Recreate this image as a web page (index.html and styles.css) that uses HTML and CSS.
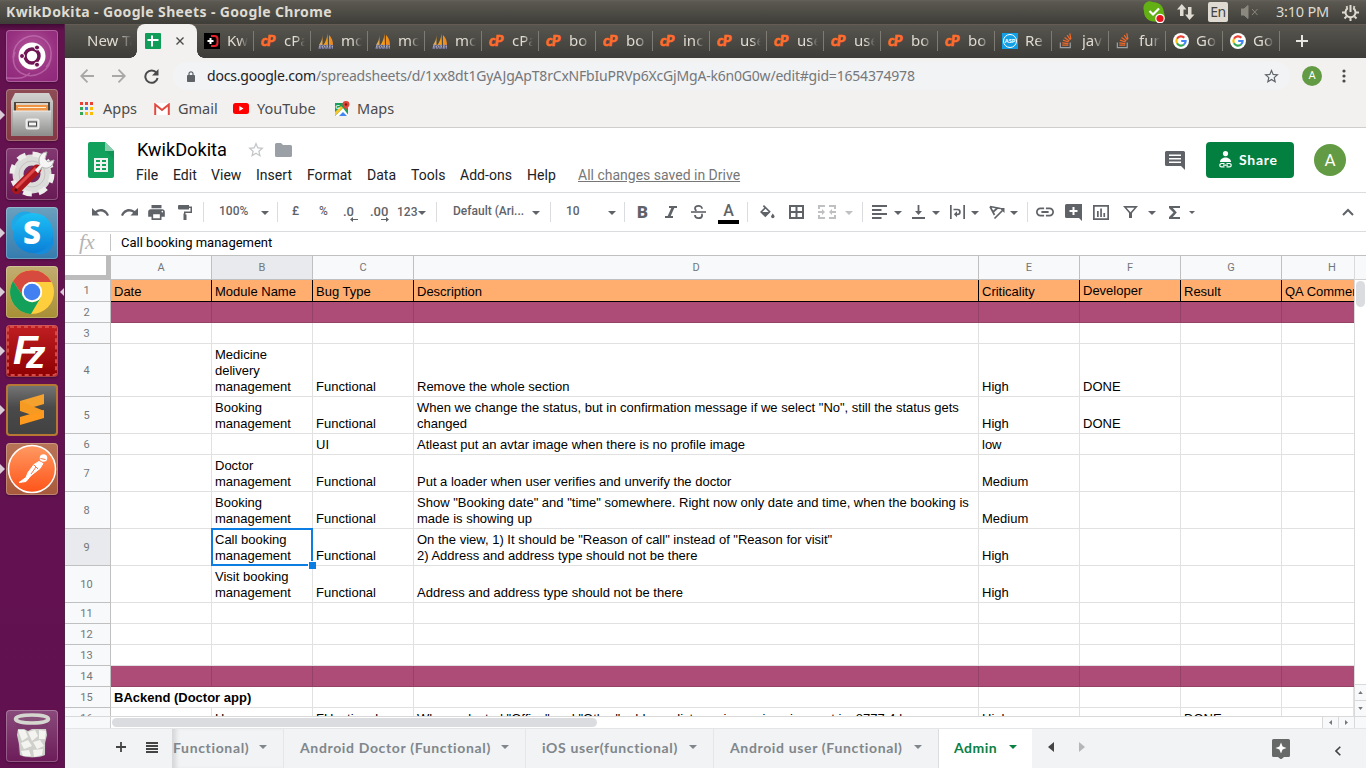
FILE: index.html
```html
<!DOCTYPE html>
<html lang="en">
<head>
<meta charset="utf-8">
<title>KwikDokita - Google Sheets</title>
<link rel="stylesheet" href="styles.css">
</head>
<body>
<svg class="defs" width="0" height="0">
  <defs>
    <linearGradient id="sail" x1="0" y1="0" x2="1" y2="0"><stop offset="0" stop-color="#d8b070"/><stop offset=".5" stop-color="#f89c0e"/><stop offset="1" stop-color="#e8862a"/></linearGradient>
    <linearGradient id="steel" x1="0" y1="0" x2="0" y2="1"><stop offset="0" stop-color="#d2d2d0"/><stop offset="1" stop-color="#8f8f8d"/></linearGradient>
    <linearGradient id="sky" x1="0" y1="0" x2="0" y2="1"><stop offset="0" stop-color="#1cc0f5"/><stop offset="1" stop-color="#0b7fd8"/></linearGradient>
    <linearGradient id="ember" x1="0" y1="0" x2="0" y2="1"><stop offset="0" stop-color="#ff9a62"/><stop offset="1" stop-color="#ff5419"/></linearGradient>
    <symbol id="caret" viewBox="0 0 8 4"><path d="M0 0h8L4 4z"/></symbol>
    <symbol id="cp" viewBox="0 0 17 16"><text x="0" y="12.500" font-family="Lato" font-weight="900" font-style="italic" font-size="14.500" letter-spacing="-.6" fill="#ff6c2c" stroke="#ff6c2c" stroke-width=".6">cP</text></symbol>
    <symbol id="pma" viewBox="0 0 16 16"><path d="M4.500 2c0 4-1.500 7-3.500 10h3.500zM9.500.500C9 5 8 8 5.500 12H10zM11 2c3 3 4 6 4 10h-4z" fill="url(#sail)"/><path d="M1 12.500h14M.5 15h14.500" stroke="#8284b4" stroke-width="1.500" stroke-dasharray="2.500 .8"/><path d="M1 13.800h14" stroke="#c9c9e2" stroke-dasharray="1.500 1"/></symbol>
    <symbol id="so" viewBox="0 0 14 17"><path d="M1 10v5.500h10.500V10" fill="none" stroke="#9aa0a5" stroke-width="1.300"/><path d="M3 13h6.500M3 10.600l6.500.8M3.800 7.600l6 2M5.500 4.700l5 3.800M8.200 2.200l3.500 5M11 .5l1.200 6" stroke="#f0692a" stroke-width="1.300"/></symbol>
    <symbol id="goog" viewBox="0 0 16 16"><circle cx="8" cy="8" r="8" fill="#fff"/><g fill="none" stroke-width="2.200"><path d="M4 5.700A4.600 4.600 0 0 1 11.300 4.800" stroke="#ea4335"/><path d="M4 5.700a4.600 4.600 0 0 0 0 4.600" stroke="#fbbc05"/><path d="M4 10.300a4.600 4.600 0 0 0 7 1.200" stroke="#34a853"/><path d="M8.200 8h4.400a4.600 4.600 0 0 1-1.600 3.500" stroke="#4285f4"/></g></symbol>
    <symbol id="up" viewBox="0 0 6 4"><path d="M0 4h6L3 0z"/></symbol>
  </defs>
</svg>

<header class="panel">
  <div class="panel-title">KwikDokita - Google Sheets - Google Chrome</div>
  <svg width="22" height="22" viewBox="0 0 22 22"><path d="M5 .5c2-.6 3.500.2 4.500.5 6 0 11 3.500 11.300 10 .8 2 1.500 5 .2 7.500-2 3.500-5 3.300-7.500 2.300C6 21 1 17 1 10.500-.5 6 1 1.500 5 .500z" fill="#62b014"/><path d="M6.500 10l3.500 3.500 6-6" fill="none" stroke="#fff" stroke-width="2.200"/><circle cx="17" cy="17.500" r="4.200" fill="#e8131b" stroke="#fff" stroke-width="1.200"/></svg>
  <svg width="18" height="18" viewBox="0 0 18 18"><path d="M4.800 1L0 6.500h3V13h3.500V6.500h3zM12.500 17L8 11.500h3V4h3.500v7.500h3z" fill="#dfdbd2"/></svg>
  <div class="lang">En</div>
  <svg width="18" height="14" viewBox="0 0 18 14"><path d="M0 4h3l4-3.500v13L3 10H0zM11 4l5.500 6M16.500 4L11 10" fill="#8b887f" stroke="#8b887f"/></svg>
  <div class="clock">3:10 PM</div>
  <svg width="17" height="17" viewBox="0 0 17 17"><g fill="none" stroke="#dfdbd2"><path d="M5.800 4.100a5 5 0 1 0 5.400 0" stroke-width="2"/><path d="M8.500 1v7" stroke-width="2"/><path d="M4.400 2.200l1 1.600M12.600 2.200l-1 1.600M0 8.500h3M14 8.500h3M2.500 14.500L4.600 12.400M14.500 14.500l-2.100-2.100M8.500 17v-3" stroke-width="2"/></g></svg>
</header>

<div class="desktop">
<nav class="launcher">
  <div class="tile dash"><svg viewBox="0 0 52 52"><g fill="none" stroke="#d48bc8" stroke-width="1.500" opacity=".5"><path d="M7 28C7 10 25 0 39 10c8 7 8 20 1 27M45 24c1 18-18 26-30 19-8-5-9-14-6-21M0 48c13 0 16 2 24-5"/></g><circle cx="26" cy="26" r="13.500" fill="#fff"/><circle cx="26" cy="26" r="7" fill="none" stroke="#701553" stroke-width="3.500"/><g fill="#701553" stroke="#fff" stroke-width="1"><circle cx="16" cy="26" r="2.500"/><circle cx="31" cy="17.500" r="2.500"/><circle cx="31" cy="34.700" r="2.500"/></g></svg></div>
  <div class="tile files run"><svg viewBox="0 0 52 52"><path d="M9 4h34l4 8v35H5V12z" fill="url(#steel)"/><path d="M8 13h36v9H8z" fill="#4b4540"/><path d="M10 14h32v2H10z" fill="#ddd2c4"/><path d="M10 16h32v6H10z" fill="#ee9445"/><path d="M12 18.500h28" stroke="#fff0d8"/><path d="M7 22h38v24H7z" fill="url(#steel)"/><path d="M7 22h38" stroke="#eee"/><rect x="20.500" y="30.500" width="12" height="9" rx="1.500" fill="#bbb" stroke="#eee" stroke-width="2"/><rect x="22.500" y="33" width="8" height="4" fill="#f5f5f5" stroke="#444"/></svg></div>
  <div class="tile settings"><svg viewBox="0 0 52 52"><circle cx="26" cy="26" r="14" fill="none" stroke="#dcdcda" stroke-width="11"/><circle cx="26" cy="26" r="20" fill="none" stroke="#ededeb" stroke-width="5" stroke-dasharray="8.700 7"/><circle cx="26" cy="26" r="13" fill="none" stroke="#c6c5c3"/><path d="M10.500 41.500L31 21" stroke="#ad171c" stroke-width="9" stroke-linecap="round"/><path d="M10 40l20-20" stroke="#df4b4c" stroke-width="3"/><circle cx="10" cy="42" r="1.500" fill="#4b1015"/><path d="M29 22l5-5c-3-7 1-13 7-13l-2 7 3 3 6-2c-1 7-7 10-12 7l-4 6z" fill="#f5f5f5" stroke="#b4b4b4"/></svg></div>
  <div class="tile skype run"><svg viewBox="0 0 52 52"><circle cx="19" cy="18" r="13.500" fill="#1fa8e6"/><circle cx="34" cy="34" r="13.500" fill="#158bdc"/><circle cx="27" cy="26" r="20" fill="url(#sky)"/><text x="26" y="37" text-anchor="middle" font-family="Open Sans" font-weight="800" font-size="31" fill="#fff">S</text></svg></div>
  <div class="tile chrome run active"><svg viewBox="0 0 52 52"><circle cx="26" cy="26" r="22" fill="#ffce3c"/><path d="M26 16h19.500A22 22 0 0 0 7 15l10.500 16A10 10 0 0 1 26 16z" fill="#d64b3e"/><path d="M7 15a22 22 0 0 0 18 33l10-17a10 10 0 0 1-17.500 0z" fill="#13a05b"/><circle cx="26" cy="26" r="10.200" fill="#fff"/><circle cx="26" cy="26" r="8.300" fill="#427ff0"/></svg></div>
  <div class="tile zilla run"><svg viewBox="0 0 52 52"><rect x="2" y="2" width="48" height="48" rx="2" fill="none" stroke="#d54a47" stroke-width="2" stroke-dasharray="4 3"/><g font-family="Liberation Sans" font-weight="700" font-style="italic" fill="#fff"><text x="7" y="39" font-size="41">F</text><text x="20" y="43" font-size="39">z</text></g></svg></div>
  <div class="tile sublime run"><svg viewBox="0 0 52 52"><path d="M14 17l24-7v10l-24 7z" fill="#f5a12d"/><path d="M14 19l24 8v7l-24-8z" fill="#d98118"/><path d="M14 33l24-7v8L14 41z" fill="#ff9a1e"/><path d="M14 17v10l12 4 12-4z" fill="#f79a22"/></svg></div>
  <div class="tile postman run"><svg viewBox="0 0 52 52"><circle cx="26" cy="26" r="23.500" fill="url(#ember)" stroke="#fff" stroke-width="1.500"/><circle cx="37.500" cy="15" r="3.800" fill="#fff"/><path d="M33 18.500l-5 3-6 8-2 5-7 5 7-1 5-6 9-7 3-5z" fill="#fff" stroke="#fff" stroke-linejoin="round"/><path d="M30 24l-5 7M28 22l4 4M34.500 15.500l5 1" stroke="#ff713d"/></svg></div>
  <div class="tile trash"><svg viewBox="0 0 52 52"><path d="M10 12l3 33c6 4 20 4 26 0l3-33z" fill="#7d3a6c"/><path d="M12 19h6l4 2 4-2h6l8 0 1 6-2 8 0 12c-6 3-19 3-25 0l-1-11-2-9z" fill="#cfcfcb"/><path d="M12 20l7 0 3 7-6 4zM22 22l7-2 3 6-6 5zM33 20l7 1-1 8-6 0zM15 33l7-3 4 6-8 3zM27 32l7-2 4 6-7 3zM15 41l8-1 2 6-8 0zM27 40l10-1-1 6-8 2z" fill="#f3f3f0"/><ellipse cx="26" cy="9" rx="16.500" ry="4" fill="#865078" stroke="#d6d6d0" stroke-width="3.500"/></svg></div>
</nav>

<main class="browser">
  <div class="tabstrip">
    <div class="newtab-tab"><span class="fade">New Tab</span></div>
    <div class="tab-active">
      <svg width="16" height="16" viewBox="0 0 16 16"><rect width="16" height="16" rx="1" fill="#0f9d58"/><path d="M2.500 7h11M7 2.500v11" stroke="#fff" stroke-width="2"/></svg>
      <svg width="8" height="8" viewBox="0 0 8 8"><path d="M.5.500l7 7M7.500.500l-7 7" stroke="#4a4a48" stroke-width="1.400"/></svg>
    </div>
    <div class="tab"><svg width="16" height="16" viewBox="0 0 16 16"><path d="M0 0h16v16H0z" fill="#000"/><path d="M7 3h3.500q3 0 3 3v4q0 3-3 3H7" fill="none" stroke="#e8202a" stroke-width="2"/><path d="M6.500 5v6M3.500 8h6" stroke="#fff" stroke-width="2"/></svg><span class="fade">Kwik</span></div>
    <div class="tab"><svg width="17" height="16"><use href="#cp"/></svg><span class="fade">cPa</span></div>
    <div class="tab"><svg width="16" height="16"><use href="#pma"/></svg><span class="fade">mo</span></div>
    <div class="tab"><svg width="16" height="16"><use href="#pma"/></svg><span class="fade">mo</span></div>
    <div class="tab"><svg width="16" height="16"><use href="#pma"/></svg><span class="fade">mo</span></div>
    <div class="tab"><svg width="17" height="16"><use href="#cp"/></svg><span class="fade">cPa</span></div>
    <div class="tab"><svg width="17" height="16"><use href="#cp"/></svg><span class="fade">bo</span></div>
    <div class="tab"><svg width="17" height="16"><use href="#cp"/></svg><span class="fade">bo</span></div>
    <div class="tab"><svg width="17" height="16"><use href="#cp"/></svg><span class="fade">inc</span></div>
    <div class="tab"><svg width="17" height="16"><use href="#cp"/></svg><span class="fade">use</span></div>
    <div class="tab"><svg width="17" height="16"><use href="#cp"/></svg><span class="fade">use</span></div>
    <div class="tab"><svg width="17" height="16"><use href="#cp"/></svg><span class="fade">use</span></div>
    <div class="tab"><svg width="17" height="16"><use href="#cp"/></svg><span class="fade">bo</span></div>
    <div class="tab"><svg width="17" height="16"><use href="#cp"/></svg><span class="fade">bo</span></div>
    <div class="tab"><svg width="16" height="16" viewBox="0 0 16 16"><path d="M0 0h16v16H0z" fill="#129fe6"/><circle cx="8" cy="8" r="6.500" fill="none" stroke="#fff"/><text x="8" y="10" text-anchor="middle" font-family="Lato" font-weight="900" font-size="5.500" fill="#fff">ASP</text></svg><span class="fade">Re</span></div>
    <div class="tab"><svg width="14" height="16"><use href="#so"/></svg><span class="fade">java</span></div>
    <div class="tab"><svg width="14" height="16"><use href="#so"/></svg><span class="fade">fun</span></div>
    <div class="tab"><svg width="16" height="16"><use href="#goog"/></svg><span class="fade">Go</span></div>
    <div class="tab"><svg width="16" height="16"><use href="#goog"/></svg><span class="fade">Go</span></div>
    <svg class="plus" width="12" height="12" viewBox="0 0 12 12"><path d="M6 0v12M0 6h12" stroke="#e8e6e1" stroke-width="2"/></svg>
  </div>

  <div class="navbar">
    <svg width="14" height="14" viewBox="0 0 14 14"><path d="M14 7H1.500M7.500.700L1.200 7l6.300 6.300" fill="none" stroke="#a9a8a7" stroke-width="1.800"/></svg>
    <svg width="14" height="14" viewBox="0 0 14 14"><path d="M0 7h12.500M6.500.700L12.800 7l-6.300 6.300" fill="none" stroke="#a9a8a7" stroke-width="1.800"/></svg>
    <svg width="15" height="15" viewBox="0 0 15 15"><path d="M12.600 4A6.200 6.200 0 1 0 13.600 9" fill="none" stroke="#4a4a4a" stroke-width="2"/><path d="M14.500 0v6.500H8z" fill="#4a4a4a"/></svg>
    <div class="omnibox">
      <svg width="8" height="11" viewBox="0 0 8 11"><rect y="4" width="8" height="7" rx=".8" fill="#5f6368"/><path d="M2 5V2.800a2 2 0 0 1 4 0V5" fill="none" stroke="#5f6368" stroke-width="1.200"/></svg>
      <div class="url"><b>docs.google.com</b>/spreadsheets/d/1xx8dt1GyAJgApT8rCxNFbIuPRVp6XcGjMgA-k6n0G0w/edit#gid=1654374978</div>
      <svg width="15" height="14" viewBox="2 2 20 19"><path fill="#5f6368" d="M22 9.240l-7.190-.62L12 2 9.190 8.630 2 9.240l5.460 4.730L5.820 21 12 17.270 18.180 21l-1.630-7.030zM12 15.400l-3.760 2.270 1-4.280-3.320-2.880 4.380-.38L12 6.100l1.710 4.040 4.380.38-3.320 2.880 1 4.280z"/></svg>
    </div>
    <div class="me-small">A</div>
    <svg width="4" height="14" viewBox="0 0 4 14" fill="#4a4a4a"><circle cx="2" cy="2" r="1.600"/><circle cx="2" cy="7" r="1.600"/><circle cx="2" cy="12" r="1.600"/></svg>
  </div>

  <div class="bookmarks">
    <svg width="13" height="13" viewBox="0 0 13 13"><path d="M0 0h3v3H0zM5 0h3v3H5zM10 0h3v3h-3zM0 5h3v3H0z" fill="#ea4335"/><path d="M5 5h3v3H5z" fill="#4285f4"/><path d="M10 5h3v3h-3zM10 10h3v3h-3zM5 10h3v3H5z" fill="#fbbc05"/><path d="M0 10h3v3H0zM0 5h3v3H0z" fill="#34a853"/></svg>
    <span>Apps</span>
    <svg width="16" height="12" viewBox="0 0 16 12"><rect width="16" height="12" rx="1" fill="#fff"/><path d="M1.200 12V1.500L8 7l6.800-5.500V12" fill="none" stroke="#e04a3f" stroke-width="2"/></svg>
    <span>Gmail</span>
    <svg width="16" height="11" viewBox="0 0 16 11"><rect width="16" height="11" rx="2.500" fill="#f00"/><path d="M6.300 3v5l4.200-2.500z" fill="#fff"/></svg>
    <span class="wide">YouTube</span>
    <svg width="16" height="16" viewBox="0 0 16 16"><path d="M1 2h8l5 5v8H1z" fill="#1a9f5a"/><path d="M1 15L9 7l6 8z" fill="#fff"/><path d="M1 15V11l6-6 2 2z" fill="#f9c32a"/><path d="M5 15l4-4 4 4z" fill="#4285f4"/><text x="1.500" y="7.500" font-family="Lato" font-size="6" font-weight="700" fill="#fff">G</text><path d="M12 0a3.500 3.500 0 0 0-3.500 3.600C8.500 6 11.500 7 12 10c.5-3 3.500-4 3.500-6.400A3.500 3.500 0 0 0 12 0z" fill="#e04538"/><circle cx="12" cy="3.500" r="1.200" fill="#7b1c14"/></svg>
    <span>Maps</span>
  </div>

  <section class="docs-head">
    <svg class="logo" width="26" height="36" viewBox="0 0 26 36"><path d="M2 0h15l9 9v25a2 2 0 0 1-2 2H2a2 2 0 0 1-2-2V2a2 2 0 0 1 2-2z" fill="#12a15c"/><path d="M17 0l9 9h-9z" fill="#87ceac"/><path d="M17 9h9v8z" fill="#0b8a4d" opacity=".5"/><path d="M6 16h14v14H6zM8 18v2h4v-2zM14 18v2h4v-2zM8 22v2h4v-2zM14 22v2h4v-2zM8 26v2h4v-2zM14 26v2h4v-2z" fill="#f1f1f1" fill-rule="evenodd"/></svg>
    <div class="doc-info">
      <div class="doc-title"><h1>KwikDokita</h1>
        <svg width="16" height="15" viewBox="2 2 20 19"><path fill="#c4c6c8" d="M22 9.240l-7.190-.62L12 2 9.190 8.630 2 9.240l5.460 4.730L5.820 21 12 17.270 18.180 21l-1.630-7.030zM12 15.400l-3.760 2.270 1-4.280-3.320-2.880 4.380-.38L12 6.100l1.710 4.040 4.380.38-3.320 2.880 1 4.280z"/></svg>
        <svg width="17" height="14" viewBox="0 0 17 14"><path d="M1.500 0H6l2 2h7.500A1.500 1.500 0 0 1 17 3.500v9a1.500 1.500 0 0 1-1.500 1.500h-14A1.500 1.500 0 0 1 0 12.500v-11A1.500 1.500 0 0 1 1.500 0z" fill="#9aa0a6"/></svg>
      </div>
      <div class="menu"><span>File</span><span>Edit</span><span>View</span><span>Insert</span><span>Format</span><span>Data</span><span>Tools</span><span>Add-ons</span><span>Help</span><a class="saved">All changes saved in Drive</a></div>
    </div>
    <svg class="comments" width="20" height="19" viewBox="0 0 20 19"><path d="M1.500 0h17A1.500 1.500 0 0 1 20 1.500V19l-4-4H1.500A1.500 1.500 0 0 1 0 13.500v-12A1.500 1.500 0 0 1 1.500 0zM4 3.500v1.500h12V3.500zM4 7v1.500h12V7zM4 10.500V12h12v-1.500z" fill="#5f6368" fill-rule="evenodd"/></svg>
    <button class="share"><svg width="13" height="17" viewBox="0 0 13 17"><circle cx="6.500" cy="2.600" r="2.600" fill="#fff"/><path d="M1 11c0-3 3-4.500 5.500-4.500S12 8 12 11z" fill="#fff"/><path d="M5.500 12.500h-3a1.700 1.700 0 0 0 0 3.400h3M7.500 12.500h3a1.700 1.700 0 0 1 0 3.400h-3M4 14.200h5" fill="none" stroke="#fff" stroke-width="1.200"/></svg>Share</button>
    <div class="me">A</div>
  </section>

  <div class="toolbar">
    <svg width="17" height="8" viewBox="0 0 17 8"><path d="M0 0v7.500h7.500L4.800 4.800C8.500 2.200 13 3.500 15 8l2-.8C14.500 1 8.500-1 3.200 3.100z"/></svg>
    <svg width="17" height="8" viewBox="0 0 17 8"><path d="M17 0v7.500H9.500l2.700-2.700C8.500 2.200 4 3.500 2 8L0 7.200C2.500 1 8.500-1 13.800 3.100z"/></svg>
    <svg width="17" height="15" viewBox="2 3 20 18"><path d="M19 8H5c-1.660 0-3 1.340-3 3v6h4v4h12v-4h4v-6c0-1.660-1.340-3-3-3zm-3 11H8v-5h8v5zm3-7c-.55 0-1-.45-1-1s.45-1 1-1 1 .45 1 1-.45 1-1 1zm-1-9H6v4h12V3z"/></svg>
    <svg width="14" height="15" viewBox="0 0 14 15"><path d="M1 0h10v1.500h3V8H7.500v1.500h1V15h-3V8.500H6V6.500h6.500V3H11v1.500H1a1 1 0 0 1-1-1V1a1 1 0 0 1 1-1z"/></svg>
    <i class="sep"></i>
    <span class="t">100%</span>
    <svg class="c" width="8" height="4"><use href="#caret"/></svg>
    <i class="sep"></i>
    <span class="t">£</span><span class="t">%</span>
    <span class="dec">.0<svg width="8" height="5" viewBox="0 0 8 5"><path d="M8 2H3V0L0 2.500 3 5V3h5z"/></svg></span>
    <span class="dec two">.00<svg width="8" height="5" viewBox="0 0 8 5"><path d="M0 2h5V0l3 2.500L5 5V3H0z"/></svg></span>
    <span class="t low">123</span>
    <svg class="c" width="8" height="4"><use href="#caret"/></svg>
    <i class="sep"></i>
    <span class="t">Default (Ari...</span>
    <svg class="c" width="8" height="4"><use href="#caret"/></svg>
    <i class="sep"></i>
    <span class="t">10</span>
    <svg class="c" width="8" height="4"><use href="#caret"/></svg>
    <i class="sep"></i>
    <span class="bold">B</span>
    <svg width="12" height="12" viewBox="0 0 12 12"><path d="M4 0h8v2H9.300L5.700 10H8v2H0v-2h2.700L6.300 2H4z"/></svg>
    <svg width="15" height="14" viewBox="0 0 15 14"><path d="M0 6.200h15v1.600H0z"/><path d="M11 3.800C11 1.800 9.500.900 7.500.900S4 1.900 4 3.500c0 1 .6 1.700 1.500 2.200M4 10c0 2 1.500 3.100 3.500 3.100s3.600-1 3.600-2.700c0-.7-.2-1.200-.6-1.600" fill="none" stroke="#5f6368" stroke-width="1.800"/></svg>
    <span class="tcolor">A</span>
    <i class="sep"></i>
    <svg width="16" height="14" viewBox="0 0 16 14"><path d="M5 0l6.800 6.800L6.300 12.300 1 7l4.300-4.300L3.800 1.200zM6.500 3.800L3.300 7h6.400z" fill-rule="evenodd"/><path d="M13.800 8.500s1.700 2 1.700 3a1.700 1.700 0 0 1-3.400 0c0-1 1.700-3 1.700-3z"/></svg>
    <svg width="15" height="14" viewBox="0 0 15 14"><path d="M0 0h15v14H0zM2 2v4h4.500V2zM8.500 2v4H13V2zM2 8v4h4.500V8zM8.500 8v4H13V8z" fill-rule="evenodd"/></svg>
    <svg class="off" width="18" height="14" viewBox="0 0 18 14"><path d="M0 0h7v2H2v2H0zM11 0h7v4h-2V2h-5zM0 10h2v2h5v2H0zM16 10h2v4h-7v-2h5zM0 6h4V4l3 3-3 3V8H0zM18 6h-4V4l-3 3 3 3V8h4z"/></svg>
    <svg class="c off" width="8" height="4"><use href="#caret"/></svg>
    <i class="sep"></i>
    <svg width="15" height="14" viewBox="0 0 15 14"><path d="M0 0h15v2H0zM0 4h9.500v2H0zM0 8h15v2H0zM0 12h9.500v2H0z"/></svg>
    <svg class="c" width="8" height="4"><use href="#caret"/></svg>
    <svg width="14" height="14" viewBox="0 0 14 14"><path d="M0 12h13v2H0zM5.600 0h1.800v6H10l-3.500 4L3 6h2.600z"/></svg>
    <svg class="c" width="8" height="4"><use href="#caret"/></svg>
    <svg width="15" height="14" viewBox="0 0 15 14"><path d="M0 0h1.700v14H0zM13.300 0H15v14h-1.700z"/><path d="M3.500 4.500h4a2.300 2.300 0 0 1 0 4.800H6" fill="none" stroke="#5f6368" stroke-width="1.700"/><path d="M7 6.200v6L3.800 9.200z"/></svg>
    <svg class="c" width="8" height="4"><use href="#caret"/></svg>
    <svg width="16" height="15" viewBox="0 0 16 15"><path d="M1 1.500l10.500 2M1 1.500l4.500 8.500M4 7l4.500-4" fill="none" stroke="#5f6368" stroke-width="1.700"/><path d="M5.500 13.500l8-8" stroke="#5f6368" stroke-width="1.700"/><path d="M15.500 3v5l-5-5z"/></svg>
    <svg class="c" width="8" height="4"><use href="#caret"/></svg>
    <i class="sep"></i>
    <svg width="18" height="10" viewBox="2 7 20 10"><path d="M3.900 12c0-1.710 1.390-3.100 3.100-3.100h4V7H7c-2.760 0-5 2.240-5 5s2.240 5 5 5h4v-1.900H7c-1.710 0-3.100-1.390-3.100-3.100zM8 13h8v-2H8v2zm9-6h-4v1.900h4c1.710 0 3.100 1.390 3.100 3.100s-1.390 3.100-3.100 3.100h-4V17h4c2.760 0 5-2.240 5-5s-2.240-5-5-5z"/></svg>
    <svg width="17" height="17" viewBox="0 0 17 17"><path d="M1.500 0H17v17l-3-3H1.500A1.500 1.500 0 0 1 0 12.500v-11A1.500 1.500 0 0 1 1.500 0zM7.500 3v3h-3v2h3v3h2V8h3V6h-3V3z" fill-rule="evenodd"/></svg>
    <svg width="16" height="15" viewBox="0 0 16 15"><path d="M0 0h16v15H0zM1.700 1.700v11.600h12.600V1.700zM4 6h1.700v6H4zM7.200 3.500h1.700V12H7.200zM10.400 8h1.700v4h-1.700z" fill-rule="evenodd"/></svg>
    <svg width="15" height="12" viewBox="0 0 15 12"><path d="M0 0h15L9 7v5H6V7zM3.500 1.700l4 4.500 4-4.500z" fill-rule="evenodd"/></svg>
    <svg class="c" width="8" height="4"><use href="#caret"/></svg>
    <svg width="11" height="13" viewBox="0 0 11 13"><path d="M0 0h11v2H3.800l4 4.500-4 4.500H11v2H0v-2l4.500-4.500L0 2z"/></svg>
    <svg class="c" width="6" height="3"><use href="#caret"/></svg>
    <svg width="12" height="8" viewBox="0 0 12 8"><path d="M1 7l5-5 5 5" fill="none" stroke="#5f6368" stroke-width="2"/></svg>
  </div>

  <div class="formula"><span class="fx">fx</span><i></i><span class="value">Call booking management</span></div>

  <div class="sheet-area">
    <div class="sheet">
      <div class="corner"></div><div class="ch">A</div><div class="ch sel">B</div><div class="ch">C</div><div class="ch">D</div><div class="ch">E</div><div class="ch">F</div><div class="ch">G</div><div class="ch last">H</div>
      <div class="rh">1</div><div class="o">Date</div><div class="o">Module Name</div><div class="o">Bug Type</div><div class="o">Description</div><div class="o">Criticality</div><div class="o raised">Developer</div><div class="o">Result</div><div class="o">QA Comments</div>
      <div class="rh">2</div><div class="p"></div><div class="p"></div><div class="p"></div><div class="p"></div><div class="p"></div><div class="p"></div><div class="p"></div><div class="p"></div>
      <div class="rh">3</div><div></div><div></div><div></div><div></div><div></div><div></div><div></div><div></div>
      <div class="rh">4</div><div></div><div>Medicine<br>delivery<br>management</div><div>Functional</div><div>Remove the whole section</div><div>High</div><div>DONE</div><div></div><div></div>
      <div class="rh">5</div><div></div><div>Booking<br>management</div><div>Functional</div><div>When we change the status, but in confirmation message if we select "No", still the status gets<br>changed</div><div>High</div><div>DONE</div><div></div><div></div>
      <div class="rh">6</div><div></div><div></div><div>UI</div><div>Atleast put an avtar image when there is no profile image</div><div>low</div><div></div><div></div><div></div>
      <div class="rh">7</div><div></div><div>Doctor<br>management</div><div>Functional</div><div>Put a loader when user verifies and unverify the doctor</div><div>Medium</div><div></div><div></div><div></div>
      <div class="rh">8</div><div></div><div>Booking<br>management</div><div>Functional</div><div>Show "Booking date" and "time" somewhere. Right now only date and time, when the booking is<br>made is showing up</div><div>Medium</div><div></div><div></div><div></div>
      <div class="rh sel">9</div><div></div><div class="cursor">Call booking<br>management</div><div>Functional</div><div>On the view, 1) It should be "Reason of call" instead of "Reason for visit"<br>2) Address and address type should not be there</div><div>High</div><div></div><div></div><div></div>
      <div class="rh">10</div><div></div><div>Visit booking<br>management</div><div>Functional</div><div>Address and address type should not be there</div><div>High</div><div></div><div></div><div></div>
      <div class="rh">11</div><div></div><div></div><div></div><div></div><div></div><div></div><div></div><div></div>
      <div class="rh">12</div><div></div><div></div><div></div><div></div><div></div><div></div><div></div><div></div>
      <div class="rh">13</div><div></div><div></div><div></div><div></div><div></div><div></div><div></div><div></div>
      <div class="rh">14</div><div class="p"></div><div class="p"></div><div class="p"></div><div class="p"></div><div class="p"></div><div class="p"></div><div class="p"></div><div class="p"></div>
      <div class="rh">15</div><div class="section">BAckend (Doctor app)</div><div></div><div></div><div></div><div></div><div></div><div></div>
      <div class="rh">16</div><div></div><div>Home</div><div>FUnctional</div><div>When selected "Office" and "Other" address, list was in previous is event in: 8777 4 la</div><div>High</div><div></div><div>DONE</div><div></div>
    </div>
    <div class="vscroll"><div class="vhead"></div><div class="vthumb"></div><div class="btn first"><svg width="5" height="3"><use href="#up"/></svg></div><div class="btn down"><svg width="5" height="3"><use href="#up"/></svg></div></div>
  </div>
  <div class="hscroll"><div class="hleft"></div><div class="track"><div class="hthumb"></div></div><div class="hb"><svg width="3" height="5" viewBox="0 0 3 5"><path d="M3 0v5L0 2.500z"/></svg></div><div class="hb"><svg width="3" height="5" viewBox="0 0 3 5"><path d="M0 0v5l3-2.500z"/></svg></div><div class="hend"></div></div>

  <footer class="sheets">
    <svg class="add" width="10" height="10" viewBox="0 0 10 10"><path d="M5 0v10M0 5h10" stroke="#444" stroke-width="1.800"/></svg>
    <svg class="all" width="12" height="11" viewBox="0 0 12 11"><path d="M0 1h12M0 4h12M0 7h12M0 10h12" stroke="#444" stroke-width="1.900"/></svg>
    <div class="st cut"><span>Functional)</span><svg width="8" height="4"><use href="#caret"/></svg></div>
    <div class="st s2"><span>Android Doctor (Functional)</span><svg width="8" height="4"><use href="#caret"/></svg></div>
    <div class="st s3"><span>iOS user(functional)</span><svg width="8" height="4"><use href="#caret"/></svg></div>
    <div class="st s4"><span>Android user (Functional)</span><svg width="8" height="4"><use href="#caret"/></svg></div>
    <div class="st on"><span>Admin</span><svg width="8" height="4"><use href="#caret"/></svg></div>
    <svg class="prev" width="6" height="10" viewBox="0 0 6 10"><path d="M6 0v10L0 5z" fill="#444"/></svg>
    <svg class="next" width="6" height="10" viewBox="0 0 6 10"><path d="M0 0v10l6-5z" fill="#b4b6b8"/></svg>
    <svg class="explore" width="18" height="20" viewBox="0 0 18 20"><path d="M1.500 0h15A1.500 1.500 0 0 1 18 1.500v15a1.500 1.500 0 0 1-1.500 1.500H12l-3 2.500L6 18H1.500A1.500 1.500 0 0 1 0 16.500v-15A1.500 1.500 0 0 1 1.500 0z" fill="#666967"/><path d="M9 3.500l1.600 4L14.500 9l-3.900 1.600L9 14.500l-1.600-3.900L3.500 9l3.900-1.500z" fill="#fff"/></svg>
    <svg width="6" height="10" viewBox="0 0 6 10"><path d="M5.300.700L1 5l4.300 4.300" fill="none" stroke="#444" stroke-width="1.600"/></svg>
  </footer>
</main>
</div>
</body>
</html>
```

FILE: styles.css
```css
* { box-sizing: border-box; }
body { margin: 0; width: 1366px; height: 768px; overflow: hidden; background: #fff; font-family: Roboto, sans-serif; }
svg { display: block; flex: none; }
.defs { position: absolute; }

/* Desktop panel */
.panel { height: 24px; display: grid; grid-template-columns: 1137px 34px 31px 33px 35px 66px 1fr; align-items: center; padding-left: 6px; background: linear-gradient(#64625a, #5a5850 8%, #3e3d38); color: #dfdbd2; font-family: "Noto Sans", sans-serif; white-space: nowrap; }
.panel-title { font-weight: 700; font-size: 14px; letter-spacing: .36px; margin-top: -2px; }
.lang { width: 20px; height: 20px; border-radius: 2px; background: #dfdbd2; color: #45433e; font-size: 14px; line-height: 20px; text-align: center; letter-spacing: -.5px; }
.clock { font-size: 14.500px; letter-spacing: -.2px; margin-top: -2px; }

.desktop { display: flex; height: 744px; }
.launcher { width: 65px; flex: none; background: linear-gradient(#420a35, #64114f 7px, #621150); border-right: 1px solid #522047; padding: 6px 0 6px 6px; display: flex; flex-direction: column; gap: 7px; }
.tile { width: 52px; height: 52px; border-radius: 4px; position: relative; box-shadow: inset 0 0 0 1px rgba(255,255,255,.25), 0 1px 2px rgba(0,0,0,.3); }
.tile svg { width: 52px; height: 52px; }
.run::before { content: ""; position: absolute; left: -6px; top: 21px; border: 5px solid transparent; border-left-color: #d9ccd6; border-right: 0; }
.active::after { content: ""; position: absolute; right: -6px; top: 22px; border: 4px solid transparent; border-right-color: #d9ccd6; border-left: 0; }
.dash { background: radial-gradient(circle at 50% 40%, #b7599f, #96307f 60%, #90277b); }
.files { background: linear-gradient(#8e4c55, #853843); }
.settings { background: linear-gradient(#833872, #691a54); }
.skype { background: linear-gradient(#6ca0be, #347cae); }
.chrome { background: linear-gradient(#c2ad72, #a88f35); }
.zilla { background: linear-gradient(#c01f22, #8d0003); }
.sublime { background: linear-gradient(#777, #4a4a4a 45%, #414141); box-shadow: inset 0 0 0 2px #b77834; }
.postman { background: linear-gradient(#b87457, #a85a3b); }
.trash { margin-top: auto; background: linear-gradient(#8a4a7b, #6c1c59); }

.browser { width: 1301px; height: 744px; display: flex; flex-direction: column; }

/* Tab strip */
.tabstrip { height: 34px; display: flex; align-items: center; background: linear-gradient(#6b5f58, #57554e 4%, #3d3c38); color: #dfdbd2; font: 15px "Noto Sans", sans-serif; }
.newtab-tab { width: 72px; padding-left: 22px; }
.newtab-tab .fade { width: 45px; -webkit-mask-image: linear-gradient(90deg, #000 70%, transparent); mask-image: linear-gradient(90deg, #000 70%, transparent); }
.fade { display: block; overflow: hidden; white-space: nowrap; padding-bottom: 2px; -webkit-mask-image: linear-gradient(90deg, #000 55%, transparent); mask-image: linear-gradient(90deg, #000 55%, transparent); }
.tab-active { width: 60px; height: 34px; display: flex; align-items: center; gap: 15px; padding-left: 8px; background: #f2f1f0; border-radius: 8px 8px 0 0; position: relative; }
.tab-active::before, .tab-active::after { content: ""; position: absolute; bottom: 0; width: 7px; height: 7px; }
.tab-active::before { left: -7px; background: radial-gradient(circle at 0 0, transparent 6.500px, #f2f1f0 7px); }
.tab-active::after { right: -7px; background: radial-gradient(circle at 100% 0, transparent 6.500px, #f2f1f0 7px); }
.tab { width: 57px; height: 20px; display: grid; grid-template-columns: 24px 20px; align-items: center; padding-left: 7px; border-right: 1px solid #7d7b74; }
.tab .fade { margin-left: -1px; }
.plus { margin-left: 16px; }

/* Navigation */
.navbar { height: 37px; flex: none; background: #f2f1f0; display: grid; grid-template-columns: 32px 32px 29px 1129px 40px 1fr; align-items: center; padding: 0 0 1px 15px; }
.omnibox { width: 1117px; height: 28px; border-radius: 14px; background: #f1f3f5; display: grid; grid-template-columns: 20px 1057px 1fr; align-items: center; padding-left: 14px; }
.url { font: 14px "Noto Sans", sans-serif; letter-spacing: -.2px; color: #75777a; white-space: nowrap; padding-bottom: 1px; }
.url b { font-weight: 400; color: #202124; }
.me-small { width: 20px; height: 20px; border-radius: 50%; background: #639b44; color: #fff; font-size: 11px; line-height: 20px; text-align: center; }
.bookmarks { height: 33px; flex: none; background: #f2f1f0; border-bottom: 1px solid #cfcecd; display: grid; grid-template-columns: 23px 51px 24px 55px 24px 77px 23px 1fr; align-items: center; padding: 0 0 5px 15px; color: #4b4b4b; font: 14.500px "Noto Sans", sans-serif; }
.bookmarks span { margin-top: -2px; }

/* Document header */
.docs-head { height: 65px; flex: none; border-bottom: 1px solid #dadce0; display: grid; grid-template-columns: 48px 1029px 41px 108px 1fr; align-items: center; padding-left: 23px; }
.logo { margin-bottom: 1px; }
.doc-title { display: grid; grid-template-columns: 112px 27px 1fr; align-items: center; height: 27px; margin-top: 6px; }
.doc-title h1 { margin: 0 0 0 1px; font-weight: 400; font-size: 18.200px; color: #000; }
.menu { display: grid; grid-template-columns: 37px 38px 45px 51px 60px 44px 49px 67px 51px 1fr; font-size: 14px; letter-spacing: .03px; line-height: 20px; height: 25px; margin-top: 2px; color: #202124; white-space: nowrap; }
.saved { color: #777; text-decoration: underline; letter-spacing: 0; }
.share { width: 88px; height: 36px; border: 0; border-radius: 4px; background: #03803f; color: #fff; font: 700 14px Lato, sans-serif; letter-spacing: .7px; display: flex; align-items: center; gap: 7px; padding: 0 0 2px 13px; }
.me { width: 32px; height: 32px; border-radius: 50%; background: #639b44; color: #fff; font-size: 17px; line-height: 33px; text-align: center; }

/* Toolbar */
.toolbar { height: 39px; flex: none; border-bottom: 1px solid #dadce0; padding-left: 27px; display: grid; grid-template-columns: 29px 27px 30px 25px 16px 42px 16px 15px 27px 24px 27px 27px 21px 18px 17px 79px 18px 16px 42px 16px 13px 28px 26px 27px 29px 12px 30px 29px 27px 17px 10px 22px 18px 20px 18px 21px 18px 21px 17px 9px 29px 28px 30px 25px 21px 20px 153px 1fr; align-items: center; fill: #5f6368; color: #5f6368; font-weight: 500; font-size: 12px; white-space: nowrap; }
.sep { width: 1px; height: 20px; background: #dadce0; }
.t { margin-top: -2px; }
.low { margin-top: 0; }
.c { margin-top: 1px; }
.off { opacity: .4; }
.dec { width: 15px; font-size: 13px; line-height: 12px; margin-top: 4px; }
.dec.two { width: 19px; }
.dec svg { margin: -1px 0 0 auto; }
.bold { font-weight: 900; font-size: 17px; }
.tcolor { width: 21px; height: 22px; border-bottom: 4px solid #000; text-align: center; font-size: 16px; line-height: 17px; margin-top: 2px; }

.formula { height: 24px; flex: none; border-bottom: 1px solid #c0c0c0; display: grid; grid-template-columns: 31px 11px 1fr; align-items: center; padding: 0 0 2px 14px; }
.formula i { width: 1px; height: 17px; background: #c4c4c4; }
.fx { font: italic 22px "Liberation Serif", serif; color: #b5b5b5; line-height: 20px; margin-top: -1px; }
.value { font-size: 13px; color: #000; }

/* Grid */
.sheet-area { height: 460px; flex: none; display: flex; overflow: hidden; }
.sheet { width: 1289px; flex: none; display: grid; grid-template-columns: 46px 101px 101px 101px 565px 101px 101px 101px 72px; grid-template-rows: 24px 22px 21px 21px 53px 37px 21px 37px 37px 37px 37px 21px 21px 21px 21px 21px 21px; font: 13px/16px "Liberation Sans", Arial, sans-serif; color: #000; }
.sheet > div { border-right: 1px solid #e1e1e1; border-bottom: 1px solid #e1e1e1; padding: 0 0 1px 3px; display: flex; align-items: flex-end; white-space: nowrap; overflow: hidden; }
.sheet > .ch, .sheet > .rh { background: #f8f9fa; border-color: #c0c0c0; color: #747779; font: 11px Roboto, sans-serif; align-items: center; justify-content: center; padding: 0; }
.sheet > .rh { padding-right: 2px; border-right: 1px solid #c0c0c0; }
.sheet > .last { padding-left: 28px; border-right: 0; }
.sheet > .sel { background: #e8eaed; }
.sheet > .corner { border-right: 5px solid #bcbcbc; border-bottom: 5px solid #bcbcbc; background: #fff; }
.sheet > .o { background: #ffae70; border-color: #000; }
.sheet > .raised { padding-bottom: 2px; }
.sheet > .p { background: #ad4d77; border-color: #954266; }
.sheet > div:nth-child(9n) { border-right: 0; }
.sheet > .rh:nth-child(n) { border-right: 1px solid #c0c0c0; }
.sheet > .cursor { overflow: visible; position: relative; }
.cursor::before { content: ""; position: absolute; inset: -1px; border: 2px solid #0b7de3; }
.cursor::after { content: ""; position: absolute; right: -4px; bottom: -4px; width: 7px; height: 7px; background: #0b7de3; border: solid #fff; border-width: 1px 0 0 1px; }
.sheet > .section { grid-column: span 2; font-weight: 700; }
.vscroll { width: 12px; border-left: 1px solid #dadada; display: flex; flex-direction: column; fill: #777; }
.vhead { height: 24px; background: #f8f9fa; border-bottom: 1px solid #d0d0d0; }
.vthumb { width: 9px; height: 26px; margin: 1px; border-radius: 5px; background: #dadce0; }
.btn { height: 16px; border-top: 1px solid #d9d9d9; background: #f8f9fa; display: grid; place-items: center; }
.first { margin-top: auto; }
.down svg { transform: rotate(180deg); }
.hscroll { height: 13px; flex: none; border-top: 1px solid #d9d9d9; border-bottom: 1px solid #e3e5e7; display: grid; grid-template-columns: 46px 1211px 16px 16px 12px; fill: #777; }
.hleft { background: #f8f9fa; border-right: 1px solid #d0d0d0; }
.hthumb { width: 485px; height: 9px; margin: 1px; border-radius: 5px; background: #dadce0; }
.hb, .hend { border-left: 1px solid #d9d9d9; background: #f8f9fa; display: grid; place-items: center; }

/* Sheet tabs */
.sheets { height: 39px; flex: none; background: #f1f3f4; display: flex; align-items: center; padding-left: 51px; color: #80868b; fill: #80868b; font: 700 14px Lato, sans-serif; }
.add { margin: 0 20px 3px 0; }
.all { margin: 0 14px 2px 0; }
.st { height: 39px; display: flex; align-items: center; justify-content: space-between; padding: 0 16px 3px; border-right: 1px solid #e4e6e8; white-space: nowrap; letter-spacing: .65px; }
.cut { width: 112px; padding-left: 1px; box-shadow: inset 6px 0 4px -2px #d5d7d8; }
.s2 { width: 242px; }
.s3 { width: 188px; }
.s4 { width: 225px; border-right-color: #dcdee0; }
.on { width: 93px; padding: 0 15px 3px; background: #fff; color: #0b8043; fill: #0b8043; border: 0; letter-spacing: .5px; }
.prev { margin: 0 0 3px 16px; }
.next { margin: 0 0 3px 25px; }
.explore { margin: 0 45px 0 auto; }
.explore + svg { margin-right: 25px; margin-top: 4px; }
```
